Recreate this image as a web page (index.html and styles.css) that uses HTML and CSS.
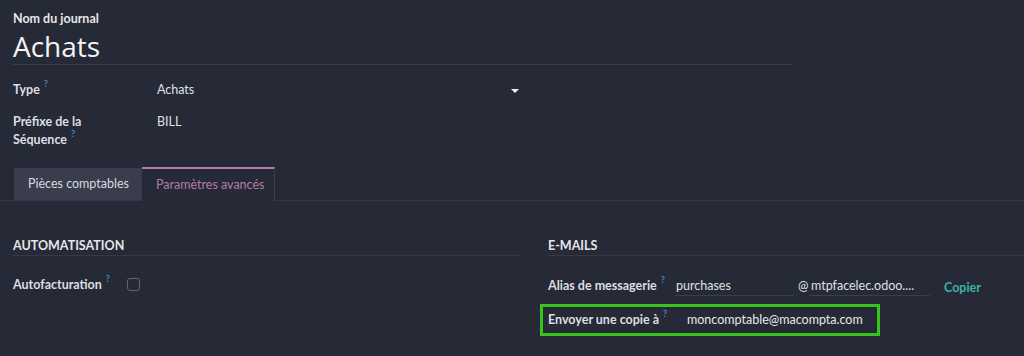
FILE: index.html
```html
<!DOCTYPE html>
<html lang="fr">
<head>
<meta charset="utf-8">
<link rel="stylesheet" href="styles.css">
</head>
<body>
<div class="sheet">
  <div class="title-block">
    <div class="title-label">Nom du journal</div>
    <h1 class="title">Achats</h1>
  </div>
  <div class="main-fields">
    <div class="row">
      <div class="label">Type<sup class="help">?</sup></div>
      <div class="value select"><span>Achats</span><span class="caret"></span></div>
    </div>
    <div class="row">
      <div class="label">Préfixe de la<br>Séquence<sup class="help">?</sup></div>
      <div class="value">BILL</div>
    </div>
  </div>
</div>
<div class="notebook">
  <div class="tab">Pièces comptables</div>
  <div class="tab active">Paramètres avancés</div>
</div>
<div class="sections">
  <div class="section left">
    <div class="section-title">AUTOMATISATION</div>
    <div class="frow auto">
      <div class="label">Autofacturation<sup class="help">?</sup></div>
      <span class="checkbox"></span>
    </div>
  </div>
  <div class="section right">
    <div class="section-title">E-MAILS</div>
    <div class="frow alias">
      <div class="label alias-label">Alias de messagerie<sup class="help">?</sup></div>
      <div class="input alias-name">purchases</div>
      <div class="at">@</div>
      <div class="input alias-domain">mtpfacelec.odoo....</div>
      <div class="copy">Copier</div>
    </div>
    <div class="frow highlight">
      <div class="label copy-label">Envoyer une copie à<sup class="help">?</sup></div>
      <div class="copy-value">moncomptable@macompta.com</div>
    </div>
  </div>
</div>
</body>
</html>
```
FILE: styles.css
```css
* { box-sizing: border-box; }
html, body { margin: 0; padding: 0; }
body {
  background: #262a36;
  color: #dfe1e6;
  font-family: "Lato", "Open Sans", sans-serif;
  font-size: 12.5px;
  line-height: 18px;
  width: 1024px;
  height: 356px;
  overflow: hidden;
}
.sheet { padding: 10px 0 0 13px; }
.title-block { width: 780px; border-bottom: 1px solid #3b3f4d; }
.title-label { font-weight: 700; color: #e6e7ea; }
.title {
  margin: 0;
  font-family: "Open Sans", sans-serif;
  font-weight: 400;
  font-size: 28px;
  line-height: 36px;
  color: #f3f4f6;
}
.main-fields { padding-top: 16px; }
.row { display: grid; grid-template-columns: 144px 365px; min-height: 32px; }
.label { font-weight: 700; color: #dcdee3; white-space: nowrap; }
.help {
  color: #4f85c6;
  font-size: 9px;
  font-weight: 700;
  padding: 0 4px;
  vertical-align: top;
  line-height: 10px;
  position: relative;
  top: -2px;
}
.value { color: #dfe1e6; }
.select { display: flex; justify-content: space-between; align-items: center; height: 18px; }
.caret {
  width: 0; height: 0;
  border-left: 4px solid transparent;
  border-right: 4px solid transparent;
  border-top: 4px solid #eceef1;
  margin-right: 3px;
  margin-top: 2px;
}
.notebook {
  margin-top: 18px;
  display: flex;
  align-items: flex-start;
  padding-left: 14px;
  border-bottom: 1px solid #353946;
  height: 34px;
}
.tab { white-space: nowrap; color: #d8dae0; }
.tab:first-child {
  background: #3a3e4c;
  width: 128px;
  height: 32px;
  line-height: 32px;
  margin-top: 1px;
  padding-left: 14px;
}
.tab.active {
  color: #b47aa8;
  border-top: 2px solid #b47aa8;
  border-right: 1px solid #3b3f4d;
  width: 133px;
  height: 34px;
  line-height: 31px;
  padding-left: 14px;
  background: #262a36;
}
.sections { display: flex; padding-top: 36px; }
.section.left { width: 507px; margin-left: 13px; }
.section.right { flex: 1; margin-left: 28px; }
.section-title {
  font-weight: 700;
  border-bottom: 1px solid #353946;
  color: #e4e6ea;
}
.frow { display: flex; align-items: center; }
.auto { margin-top: 20px; }
.checkbox {
  width: 13px; height: 13px;
  border: 1.5px solid #62666f;
  border-radius: 3px;
  margin-left: 13px;
  margin-top: -2px;
}
.alias { margin-top: 21px; align-items: flex-start; }
.alias-label { width: 127px; }
.input { border-bottom: 1px solid #3b3f4d; height: 19px; }
.alias-name { width: 119px; padding-left: 1px; }
.at { margin-left: 4px; width: 12px; }
.alias-domain { width: 120px; padding-left: 1px; }
.copy { margin-left: 14px; color: #3bb2a4; font-weight: 700; font-size: 12.5px; padding-top: 2px; }
.highlight {
  margin-top: 7px;
  margin-left: -8px;
  width: 340px;
  height: 32px;
  border: 3px solid #37c41d;
  padding-left: 5px;
}
.copy-label { width: 139px; }
.copy-value { color: #e6e8ec; }
```
